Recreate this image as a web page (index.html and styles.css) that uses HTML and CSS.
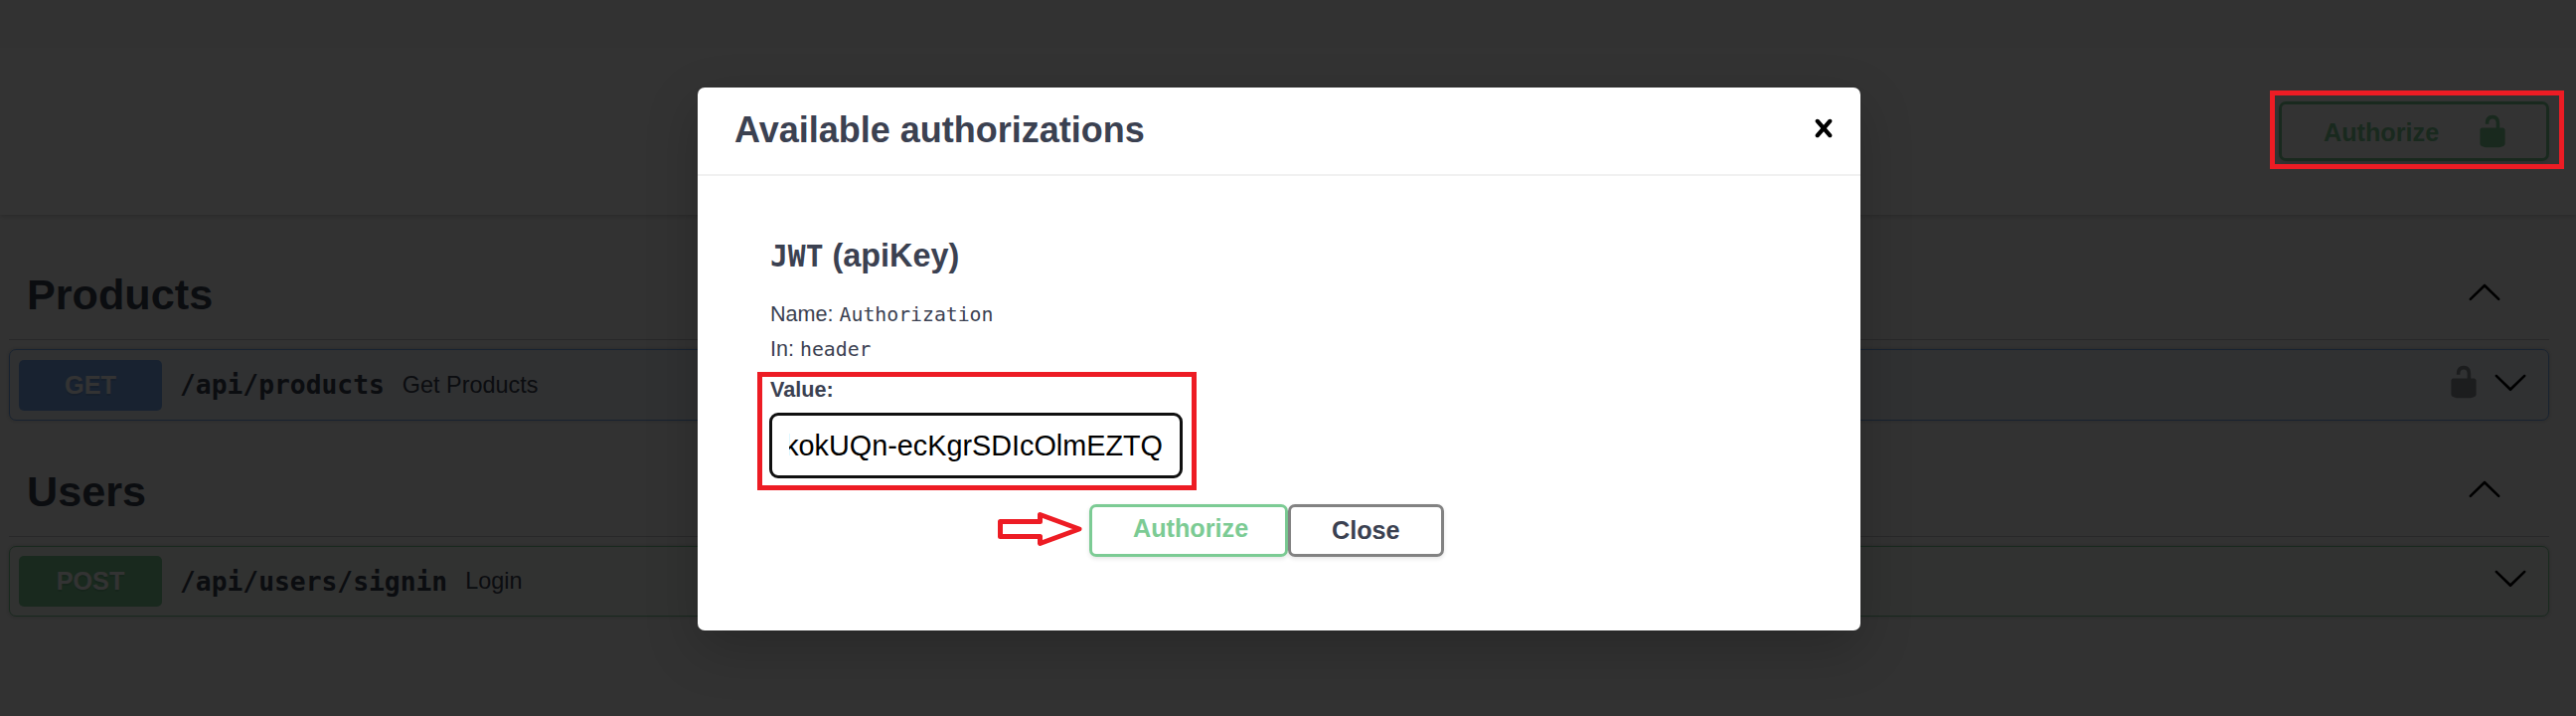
FILE: index.html
```html
<!DOCTYPE html>
<html lang="en">
<head>
<meta charset="utf-8">
<title>API documentation</title>
<link rel="stylesheet" href="styles.css">
</head>
<body>
<svg class="defs" width="0" height="0" aria-hidden="true">
  <symbol id="unlocked" viewBox="0 0 20 20"><path d="M15.8 8H14V5.6C14 2.703 12.665 1 10 1 7.334 1 6 2.703 6 5.6V6h2v-.801C8 3.754 8.797 3 10 3c1.203 0 2 .754 2 2.199V8H4c-.553 0-1 .646-1 1.199V17c0 .549.428 1.139.951 1.307l1.197.387C5.672 18.861 6.55 19 7.1 19h5.8c.549 0 1.428-.139 1.951-.307l1.196-.387c.524-.167.953-.757.953-1.306V9.199C17 8.646 16.352 8 15.8 8z"/></symbol>
  <symbol id="arrow-up" viewBox="0 0 20 20"><path d="M17.418 14.908c.272.268.709.268.979 0s.271-.701 0-.969l-7.908-7.83c-.27-.268-.707-.268-.979 0l-7.908 7.83c-.27.268-.27.701 0 .969.271.268.709.268.979 0L10 7.767l7.418 7.141z"/></symbol>
  <symbol id="arrow-down" viewBox="0 0 20 20"><path d="M17.418 6.109c.272-.268.709-.268.979 0s.271.701 0 .969l-7.908 7.83c-.27.268-.707.268-.979 0l-7.908-7.83c-.27-.268-.27-.701 0-.969.271-.268.709-.268.979 0L10 13.25l7.418-7.141z"/></symbol>
  <symbol id="close" viewBox="0 0 20 20"><path d="M14.348 14.849c-.469.469-1.229.469-1.697 0L10 11.819l-2.651 3.029c-.469.469-1.229.469-1.697 0-.469-.469-.469-1.229 0-1.697l2.758-3.15-2.759-3.152c-.469-.469-.469-1.228 0-1.697.469-.469 1.228-.469 1.697 0L10 8.183l2.651-3.031c.469-.469 1.228-.469 1.697 0 .469.469.469 1.229 0 1.697l-2.758 3.152 2.758 3.15c.469.469.469 1.229 0 1.698z"/></symbol>
</svg>

<main class="page">
  <div class="scheme">
    <button class="btn authorize scheme-btn"><span>Authorize</span><svg class="icon"><use href="#unlocked"/></svg></button>
  </div>
  <section class="tag">
    <header class="tag-head"><h2>Products</h2><svg class="icon"><use href="#arrow-up"/></svg></header>
    <div class="op get">
      <span class="method">GET</span>
      <span class="path">/api/products</span>
      <span class="desc">Get Products</span>
      <svg class="icon lock"><use href="#unlocked"/></svg>
      <svg class="icon"><use href="#arrow-down"/></svg>
    </div>
  </section>
  <section class="tag">
    <header class="tag-head"><h2>Users</h2><svg class="icon"><use href="#arrow-up"/></svg></header>
    <div class="op post">
      <span class="method">POST</span>
      <span class="path">/api/users/signin</span>
      <span class="desc">Login</span>
      <svg class="icon"><use href="#arrow-down"/></svg>
    </div>
  </section>
</main>

<div class="backdrop">
  <div class="modal">
    <header class="modal-head"><h3>Available authorizations</h3><svg class="icon"><use href="#close"/></svg></header>
    <div class="modal-body">
      <h4><code>JWT</code> (apiKey)</h4>
      <p>Name: <code>Authorization</code></p>
      <p>In: <code>header</code></p>
      <label class="value">Value:</label>
      <div class="field"><div class="field-text">kokUQn-ecKgrSDIcOlmEZTQ</div></div>
      <div class="actions">
        <button class="btn authorize">Authorize</button>
        <button class="btn close">Close</button>
      </div>
    </div>
  </div>
</div>

<div class="mark mark-scheme"></div>
<div class="mark mark-value"></div>
<svg class="pointer" viewBox="0 0 90 40"><path d="M4.5 14.5H44.5V7.5L84 22L44.5 36.5V29.5H4.5Z"/></svg>
</body>
</html>
```
FILE: styles.css
```css
* { box-sizing: border-box; }

body {
  margin: 0;
  width: 2592px;
  height: 720px;
  overflow: hidden;
  background: #fafafa;
  color: #3b4151;
  font-family: "Liberation Sans", Arial, sans-serif;
}

h2, h3, h4, p { margin: 0; }
.defs { position: absolute; }
.icon { width: 36px; height: 36px; flex: none; fill: currentColor; }

.path, code { font-family: "DejaVu Sans Mono", monospace; }
code { line-height: 1; }

.page { height: 720px; padding-top: 48px; }

.scheme {
  display: flex;
  justify-content: flex-end;
  height: 168px;
  padding: 54px 27px 0 0;
  background: #fff;
  box-shadow: 0 2px 4px rgba(0, 0, 0, .15);
  margin-bottom: 35px;
}

.btn {
  display: flex;
  align-items: center;
  height: 53px;
  padding: 0 41px;
  border: 3px solid #828282;
  border-radius: 7px;
  background: transparent;
  box-shadow: 0 2px 4px rgba(0, 0, 0, .1);
  color: #3b4151;
  font: bold 25.2px/30px "Liberation Sans", Arial, sans-serif;
}
.btn.authorize { border-color: #7ccb94; color: #7ccb94; }
.scheme-btn { width: 272px; height: 60px; padding: 0 0 0 42px; }
.scheme-btn span { flex: none; width: 151.6px; text-align: left; padding-top: 2px; }

.tag { padding: 0 27px 0 9px; margin-bottom: 26px; }
.tag-head {
  display: flex;
  align-items: center;
  justify-content: space-between;
  height: 91px;
  padding: 0 47px 0 18px;
  border-bottom: 1px solid #c7c9ce;
  margin-bottom: 9px;
}
.tag-head h2 { font-size: 43.2px; line-height: 50px; }
.tag-head .icon { margin-bottom: 6px; color: #000; }

.op {
  display: flex;
  align-items: center;
  height: 72px;
  padding: 0 20px 0 9px;
  border: 1px solid;
  border-radius: 7px;
  box-shadow: 0 0 5px rgba(0, 0, 0, .19);
}
.op.get { border-color: #7bacef; background: #edf3fa; }
.op.post { border-color: #7ccb94; background: #f5f8f6; height: 71px; }
.method {
  width: 144px;
  height: 51px;
  border-radius: 5px;
  color: #fff;
  font-size: 25.2px;
  font-weight: bold;
  line-height: 51px;
  text-align: center;
  text-shadow: 0 2px 0 rgba(0, 0, 0, .1);
}
.get .method { background: #7bacef; }
.post .method { background: #7ccb94; }
.path { margin-left: 18px; font-size: 26.3px; font-weight: bold; }
.desc { flex: 1; margin-left: 18px; font-size: 23.4px; }
.op .icon { margin-bottom: 7px; color: #000; }
.op .lock { margin-right: 11px; opacity: .4; }

.backdrop { position: absolute; inset: 0; background: rgba(0, 0, 0, .8); }

.modal {
  width: 1170px;
  height: 546px;
  margin: 87.5px 0 0 702px;
  border-radius: 7px;
  background: #fff;
  box-shadow: 0 18px 54px rgba(0, 0, 0, .2);
}
.modal-head {
  display: flex;
  align-items: center;
  justify-content: space-between;
  height: 89px;
  padding: 0 19.5px 0 37px;
  border-bottom: 2px solid #f1f1f1;
}
.modal-head h3 { font-size: 36px; line-height: 40px; }
.modal-head .icon { color: #000; margin-bottom: 4px; }

.modal-body { padding: 60.5px 73px 0; }
.modal-body h4 { height: 40px; font-size: 32.4px; line-height: 40px; margin-bottom: 21px; }
.modal-body h4 code { font-size: 29.6px; }
.modal-body p { height: 35px; font-size: 21.6px; line-height: 35px; }
.modal-body p code { font-size: 19.8px; }
.value { display: block; margin-top: 12px; font-size: 21.6px; font-weight: bold; line-height: 24px; }

.field {
  width: 416px;
  height: 66px;
  margin: 11px 0 25.5px -1px;
  padding: 0 17px;
  border: 3px solid #101010;
  border-radius: 9px;
}
.field-text {
  display: flex;
  justify-content: flex-end;
  overflow: hidden;
  color: #000;
  font-size: 28.8px;
  line-height: 60px;
  white-space: nowrap;
}

.actions { display: flex; margin-left: 321px; }
.actions .authorize { width: 200px; padding-bottom: 5px; }
.actions .close { width: 157px; padding-bottom: 1px; }

.mark { position: absolute; border: 5px solid #ed1c24; }
.mark-scheme { left: 2284px; top: 91px; width: 296px; height: 79px; }
.mark-value { left: 762px; top: 374px; width: 442px; height: 119px; }
.pointer {
  position: absolute;
  left: 1002px;
  top: 510px;
  width: 90px;
  height: 40px;
  fill: none;
  stroke: #ed1c24;
  stroke-width: 5;
  stroke-linejoin: round;
}
```
